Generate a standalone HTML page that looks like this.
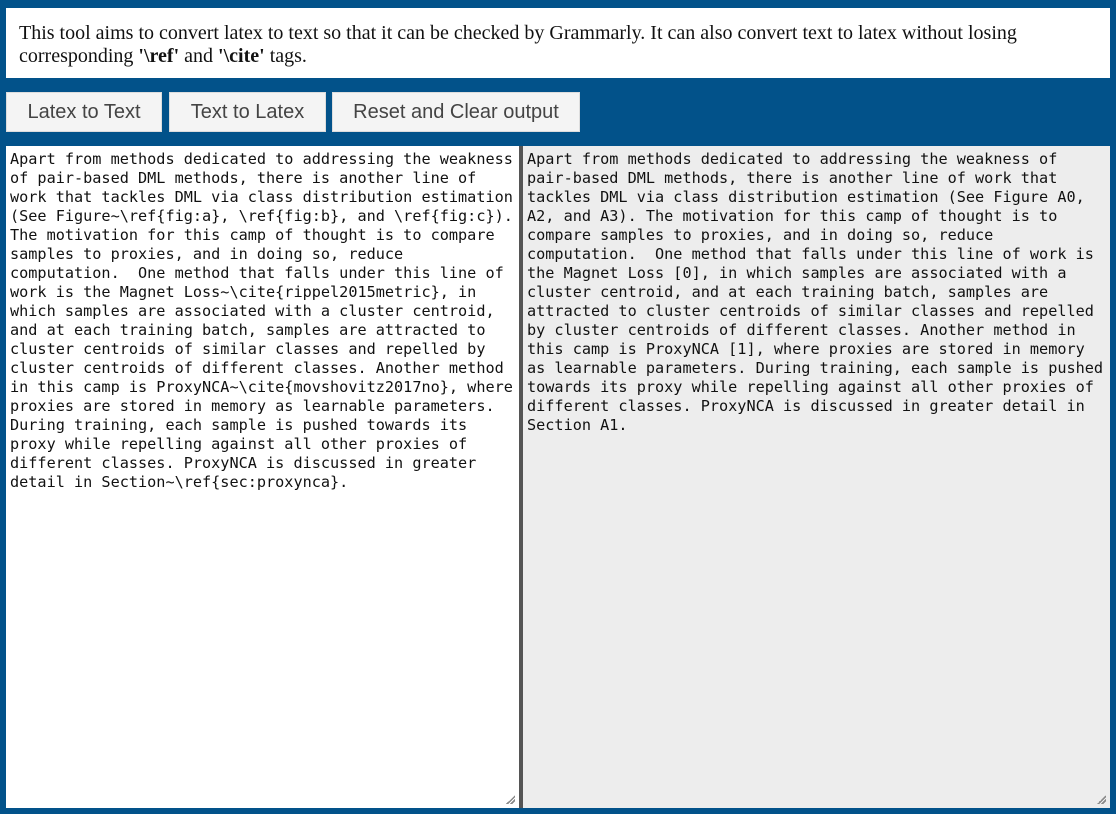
<!DOCTYPE html>
<html><head><meta charset="utf-8">
<style>
html,body{margin:0;padding:0;}
body{width:1116px;height:814px;background:#02528a;position:relative;overflow:hidden;}
.top{position:absolute;left:6px;top:8px;width:1104px;height:70px;background:#fff;}
.top p{margin:0;position:absolute;left:13px;top:14px;font-family:"Liberation Serif",serif;font-size:20px;line-height:23px;color:#111;}
.btn{position:absolute;top:92px;height:40px;background:#f4f4f4;border:1px solid #ddd;box-sizing:border-box;font-family:"Liberation Sans",sans-serif;font-size:20px;color:#444;line-height:38px;text-align:center;}
.ta{position:absolute;top:146px;height:662px;box-sizing:border-box;font-family:"DejaVu Sans Mono","Liberation Mono",monospace;font-size:15.2px;line-height:19px;color:#111;white-space:pre;padding:4px 4px;overflow:hidden;}
.l{left:6px;width:513px;background:#fff;}
.r{left:519px;width:591px;background:#ededed;border-left:4px solid #555;}
.grip{position:absolute;right:4px;bottom:4px;width:9px;height:9px;background:linear-gradient(135deg,transparent 50%,#888 50%,#888 62%,transparent 62%,transparent 72%,#888 72%,#888 84%,transparent 84%);}
</style></head><body>
<div class="top"><p>This tool aims to convert latex to text so that it can be checked by Grammarly. It can also convert text to latex without losing<br>corresponding <b>'\ref'</b> and <b>'\cite'</b> tags.</p></div>
<div class="btn" style="left:6px;width:156px;">Latex to Text</div>
<div class="btn" style="left:169px;width:157px;">Text to Latex</div>
<div class="btn" style="left:332px;width:248px;">Reset and Clear output</div>
<div class="ta l">Apart from methods dedicated to addressing the weakness
of pair-based DML methods, there is another line of
work that tackles DML via class distribution estimation
(See Figure~\ref{fig:a}, \ref{fig:b}, and \ref{fig:c}).
The motivation for this camp of thought is to compare
samples to proxies, and in doing so, reduce
computation.  One method that falls under this line of
work is the Magnet Loss~\cite{rippel2015metric}, in
which samples are associated with a cluster centroid,
and at each training batch, samples are attracted to
cluster centroids of similar classes and repelled by
cluster centroids of different classes. Another method
in this camp is ProxyNCA~\cite{movshovitz2017no}, where
proxies are stored in memory as learnable parameters.
During training, each sample is pushed towards its
proxy while repelling against all other proxies of
different classes. ProxyNCA is discussed in greater
detail in Section~\ref{sec:proxynca}.<div class="grip"></div></div>
<div class="ta r">Apart from methods dedicated to addressing the weakness of
pair-based DML methods, there is another line of work that
tackles DML via class distribution estimation (See Figure A0,
A2, and A3). The motivation for this camp of thought is to
compare samples to proxies, and in doing so, reduce
computation.  One method that falls under this line of work is
the Magnet Loss [0], in which samples are associated with a
cluster centroid, and at each training batch, samples are
attracted to cluster centroids of similar classes and repelled
by cluster centroids of different classes. Another method in
this camp is ProxyNCA [1], where proxies are stored in memory
as learnable parameters. During training, each sample is pushed
towards its proxy while repelling against all other proxies of
different classes. ProxyNCA is discussed in greater detail in
Section A1.<div class="grip"></div></div>
</body></html>
